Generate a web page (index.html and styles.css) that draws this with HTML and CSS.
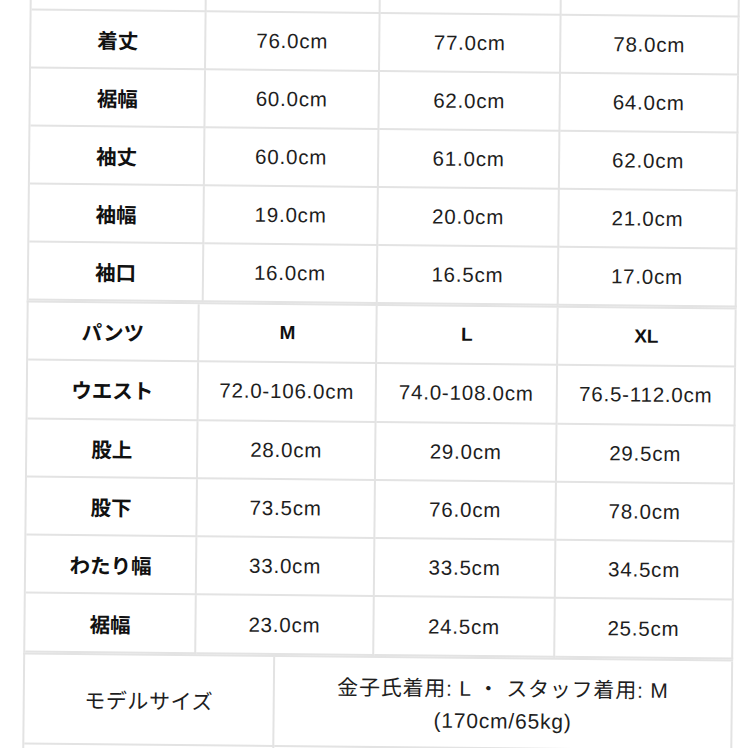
FILE: index.html
```html
<!DOCTYPE html>
<html lang="ja">
<head>
<meta charset="utf-8">
<title>サイズ表</title>
<link rel="stylesheet" href="styles.css">
</head>
<body>
<div class="sheet">
  <div class="tbl tops">
    <div class="cell label"></div><div class="cell size"></div><div class="cell size"></div><div class="cell size"></div>
    <div class="cell label">着丈</div><div class="cell num">76.0cm</div><div class="cell num">77.0cm</div><div class="cell num">78.0cm</div>
    <div class="cell label">裾幅</div><div class="cell num">60.0cm</div><div class="cell num">62.0cm</div><div class="cell num">64.0cm</div>
    <div class="cell label">袖丈</div><div class="cell num">60.0cm</div><div class="cell num">61.0cm</div><div class="cell num">62.0cm</div>
    <div class="cell label">袖幅</div><div class="cell num">19.0cm</div><div class="cell num">20.0cm</div><div class="cell num">21.0cm</div>
    <div class="cell label">袖口</div><div class="cell num">16.0cm</div><div class="cell num">16.5cm</div><div class="cell num">17.0cm</div>
  </div>
  <div class="tbl pants">
    <div class="cell label">パンツ</div><div class="cell size">M</div><div class="cell size">L</div><div class="cell size">XL</div>
    <div class="cell label">ウエスト</div><div class="cell num">72.0-106.0cm</div><div class="cell num">74.0-108.0cm</div><div class="cell num">76.5-112.0cm</div>
    <div class="cell label">股上</div><div class="cell num">28.0cm</div><div class="cell num">29.0cm</div><div class="cell num">29.5cm</div>
    <div class="cell label">股下</div><div class="cell num">73.5cm</div><div class="cell num">76.0cm</div><div class="cell num">78.0cm</div>
    <div class="cell label">わたり幅</div><div class="cell num">33.0cm</div><div class="cell num">33.5cm</div><div class="cell num">34.5cm</div>
    <div class="cell label">裾幅</div><div class="cell num">23.0cm</div><div class="cell num">24.5cm</div><div class="cell num">25.5cm</div>
  </div>
  <div class="tbl model">
    <div class="cell plain">モデルサイズ</div>
    <div class="cell plain multi">金子氏着用: L ・ スタッフ着用: M<br>(170cm/65kg)</div>
    <div class="cell plain"></div>
    <div class="cell plain"></div>
  </div>
</div>
</body>
</html>
```
FILE: styles.css
```css
html, body {
  margin: 0;
  padding: 0;
  background: #ffffff;
  overflow: hidden;
}

body {
  width: 748px;
  height: 748px;
  font-family: "Liberation Sans", "Noto Sans CJK JP", sans-serif;
  color: #1c1c1c;
}

.sheet {
  width: 710px;
  margin: -46px 0 0 26px;
  transform: rotate(0.57deg);
  transform-origin: 348px 420px;
}

.tbl {
  display: grid;
  border-left: 2px solid #e3e3e3;
  border-top: 2px solid #e3e3e3;
}

.tops {
  grid-template-columns: 175px 174px 181px 178px;
  grid-auto-rows: 58px;
}

.pants {
  grid-template-columns: 171px 178px 181px 178px;
  grid-auto-rows: 58.3px;
}

.model {
  grid-template-columns: 250px 458px;
  grid-template-rows: 90px 40px;
}

.cell {
  display: flex;
  align-items: center;
  justify-content: center;
  text-align: center;
  border-right: 2px solid #e3e3e3;
  border-bottom: 2px solid #e3e3e3;
  box-sizing: border-box;
}

.label {
  font-family: "Noto Sans CJK JP", sans-serif;
  font-weight: 700;
  font-size: 20.5px;
  color: #111111;
}

.size {
  font-weight: 700;
  font-size: 19px;
  color: #111111;
}

.num {
  font-size: 20.5px;
  letter-spacing: 0.8px;
  color: #1e1e1e;
}

.plain {
  font-family: "Liberation Sans", "Noto Sans CJK JP", sans-serif;
  font-size: 21px;
  letter-spacing: 0.6px;
  color: #1e1e1e;
}

.multi {
  line-height: 32px;
  letter-spacing: 0.8px;
  padding-top: 4px;
}
```
